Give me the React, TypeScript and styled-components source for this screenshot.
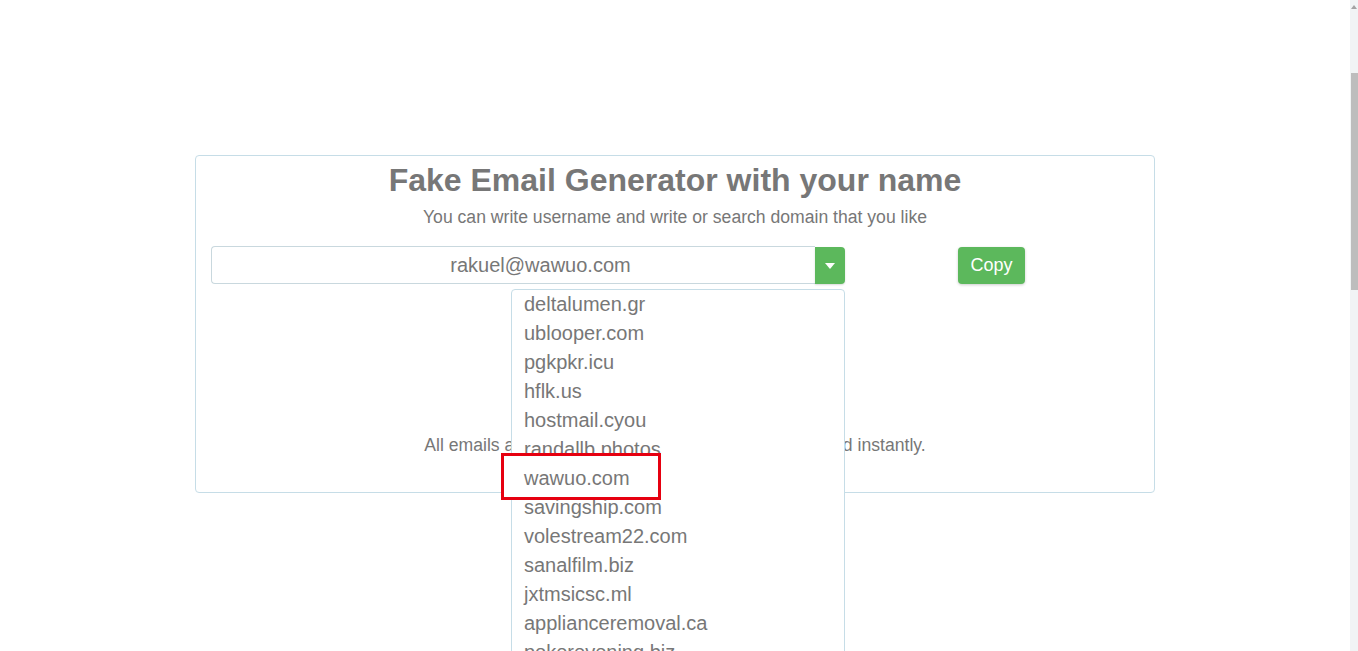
import React from "react";
import styled, { createGlobalStyle } from "styled-components";

const GlobalStyle = createGlobalStyle`
  html, body { margin: 0; padding: 0; background: #ffffff; overflow: hidden; }
  body { font-family: "Liberation Sans", Arial, sans-serif; color: #777777; }
  * { box-sizing: border-box; }
`;

const Screen = styled.div`
  position: relative;
  display: flex;
  width: 1358px;
  height: 651px;
  overflow: hidden;
`;

const Page = styled.main`
  flex: 1;
  display: flex;
  justify-content: center;
  align-items: flex-start;
  padding-top: 155px;
`;

const Scrollbar = styled.div`
  width: 8px;
  background: #f1f4f5;
  display: flex;
  flex-direction: column;
  align-items: flex-end;
  padding-top: 73px;
`;

const ScrollArrow = styled.div`
  position: absolute;
  top: 5px;
  right: 1px;
  width: 0;
  height: 0;
  border-left: 3px solid transparent;
  border-right: 3px solid transparent;
  border-bottom: 4px solid #a3a3a3;
`;

const ScrollThumb = styled.div`
  width: 7px;
  height: 217px;
  background: #bdbdbd;
`;

const Card = styled.section`
  width: 960px;
  border: 1px solid #c6dde7;
  border-radius: 4px;
  padding: 6px 15px 37px;
  text-align: center;
`;

const Title = styled.h1`
  margin: 0;
  font-size: 32px;
  line-height: 36px;
  font-weight: bold;
  color: #777777;
`;

const Subtitle = styled.p`
  margin: 9px 0 0;
  font-size: 17.6px;
  line-height: 20px;
  color: #777777;
`;

const FormRow = styled.div`
  display: flex;
  align-items: center;
  margin-top: 19px;
  height: 38px;
`;

const InputGroup = styled.div`
  position: relative;
  display: flex;
  width: 634px;
  height: 38px;
`;

const EmailInput = styled.div`
  flex: 1;
  height: 38px;
  border: 1px solid #c9d8de;
  border-right: none;
  border-radius: 4px 0 0 4px;
  font-size: 20px;
  line-height: 36px;
  color: #777777;
  text-align: center;
  padding: 0 8px 0 62px;
`;

const CaretButton = styled.div`
  width: 30px;
  height: 37px;
  margin-top: 1px;
  background: #5cb85c;
  border-radius: 0 4px 4px 0;
  display: flex;
  align-items: center;
  justify-content: center;
  box-shadow: 0 1px 2px rgba(0, 0, 0, 0.15);
`;

const Caret = styled.span`
  width: 0;
  height: 0;
  border-left: 5px solid transparent;
  border-right: 5px solid transparent;
  border-top: 6px solid #ffffff;
`;

const CopyButton = styled.button`
  margin-left: 113px;
  margin-top: 1px;
  width: 67px;
  height: 37px;
  border: none;
  border-radius: 4px;
  background: #5cb85c;
  color: #ffffff;
  font-family: "Liberation Sans", Arial, sans-serif;
  font-size: 18px;
  line-height: 37px;
  padding: 0;
  box-shadow: 0 1px 3px rgba(0, 0, 0, 0.2);
`;

const Dropdown = styled.ul`
  position: absolute;
  top: 43px;
  right: 0;
  width: 334px;
  height: 400px;
  margin: 0;
  padding: 0;
  list-style: none;
  background: #ffffff;
  border: 1px solid #c6dde7;
  border-radius: 4px;
  text-align: left;
  z-index: 5;
`;

const Item = styled.li<{ $highlight?: boolean }>`
  position: relative;
  height: 29px;
  font-size: 20px;
  line-height: 29px;
  color: #777777;
  padding-left: 12px;
  z-index: ${(p) => (p.$highlight ? 2 : 1)};
`;

const Highlight = styled.span`
  position: absolute;
  left: -11px;
  top: -11px;
  width: 160px;
  height: 47px;
  border: 3px solid #e60010;
  background: #ffffff;
  padding: 8px 0 0 20px;
  line-height: 29px;
`;

const Note = styled.p`
  margin: 151px 0 0;
  font-size: 17.6px;
  line-height: 20px;
  color: #777777;
`;

const domains = [
  "deltalumen.gr",
  "ublooper.com",
  "pgkpkr.icu",
  "hflk.us",
  "hostmail.cyou",
  "randallb.photos",
  "wawuo.com",
  "savingship.com",
  "volestream22.com",
  "sanalfilm.biz",
  "jxtmsicsc.ml",
  "applianceremoval.ca",
  "pokerevening.biz",
];

export default function App() {
  return (
    <>
      <GlobalStyle />
      <Screen>
        <Page>
          <Card>
            <Title>Fake Email Generator with your name</Title>
            <Subtitle>You can write username and write or search domain that you like</Subtitle>
            <FormRow>
              <InputGroup>
                <EmailInput>rakuel@wawuo.com</EmailInput>
                <CaretButton>
                  <Caret />
                </CaretButton>
                <Dropdown>
                  {domains.map((d) =>
                    d === "wawuo.com" ? (
                      <Item key={d} $highlight>
                        <Highlight>{d}</Highlight>
                      </Item>
                    ) : (
                      <Item key={d}>{d}</Item>
                    )
                  )}
                </Dropdown>
              </InputGroup>
              <CopyButton>Copy</CopyButton>
            </FormRow>
            <Note>All emails are sent to this mailbox and will be displayed instantly.</Note>
          </Card>
        </Page>
        <Scrollbar>
          <ScrollArrow />
          <ScrollThumb />
        </Scrollbar>
      </Screen>
    </>
  );
}
